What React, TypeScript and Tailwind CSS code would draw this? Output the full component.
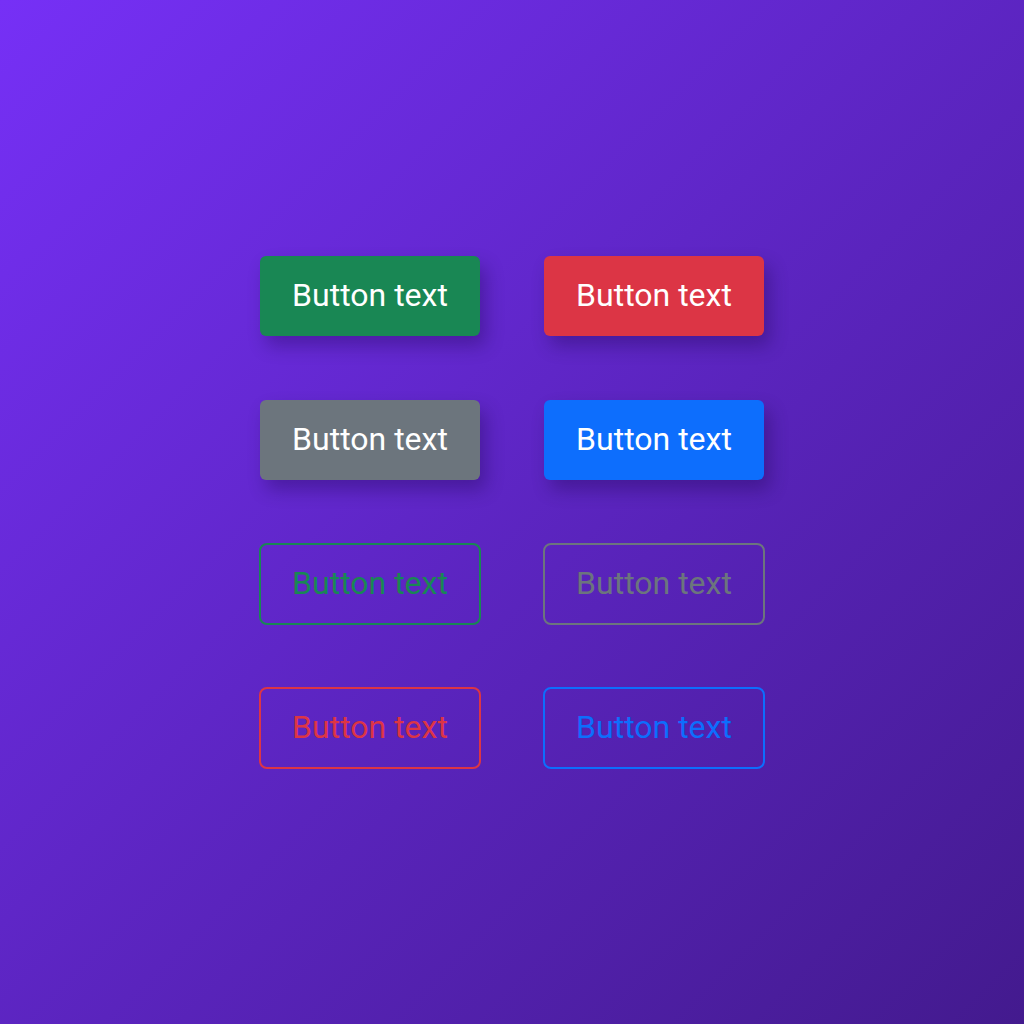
export default function App() {
  const solid = [
    "bg-[#198754]",
    "bg-[#dc3545]",
    "bg-[#6c757d]",
    "bg-[#0d6efd]",
  ];
  const outline = [
    "border-[#198754] text-[#198754]",
    "border-[#6c757d] text-[#6c757d]",
    "border-[#dc3545] text-[#dc3545]",
    "border-[#0d6efd] text-[#0d6efd]",
  ];
  return (
    <div
      className="w-[1024px] h-[1024px] bg-[linear-gradient(135deg,#7630f6,#431a8e)] flex items-center justify-center"
      style={{ fontFamily: "Roboto, 'Noto Sans', sans-serif" }}
    >
      <div className="grid grid-cols-[220px_220px] gap-x-[64px] gap-y-[64px]">
        {solid.map((c, i) => (
          <button
            key={"s" + i}
            className={`${c} w-[220px] h-[80px] pb-[2px] rounded-[6px] text-white text-[32px] leading-none shadow-[6px_10px_18px_rgba(20,0,60,0.3)] flex items-center justify-center`}
          >
            Button text
          </button>
        ))}
        {outline.map((c, i) => (
          <button
            key={"o" + i}
            className={`${c} -m-px w-[222px] h-[82px] pb-[2px] rounded-[8px] border-2 bg-transparent text-[32px] leading-none flex items-center justify-center`}
          >
            Button text
          </button>
        ))}
      </div>
    </div>
  );
}
